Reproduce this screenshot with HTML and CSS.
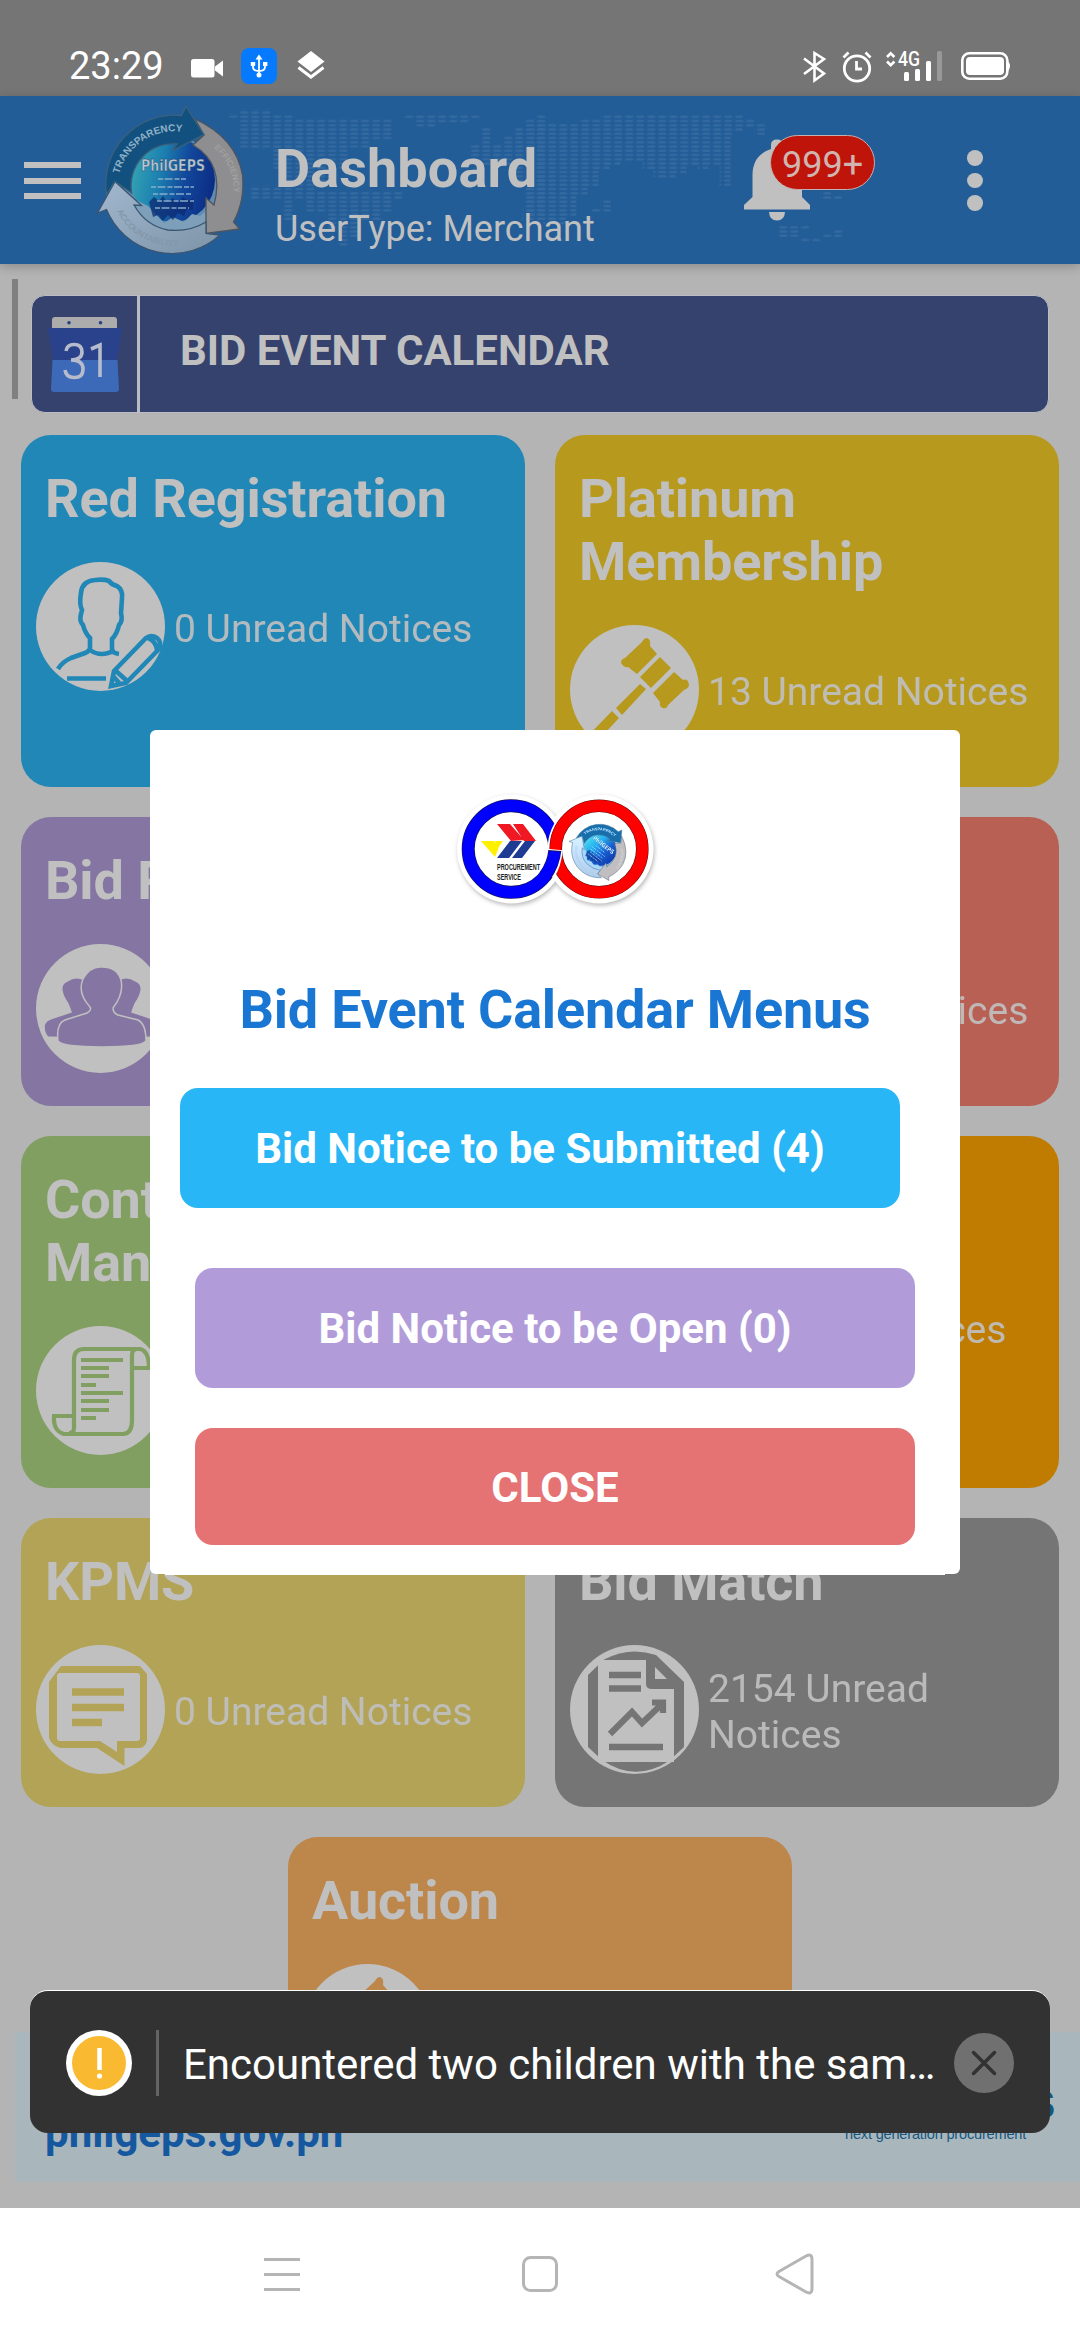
FILE: index.html
```html
<!DOCTYPE html>
<html lang="en">
<head>
<meta charset="utf-8">
<title>PhilGEPS Dashboard</title>
<link rel="stylesheet" href="styles.css">
</head>
<body>
<div class="phone">
  <div class="statusbar">
    <span class="clock">23:29</span>
    <svg class="status-left" width="140" height="40" viewBox="187 46 140 40">
      <rect x="191" y="59" width="23.500" height="18.500" rx="2.500" fill="#fff"/>
      <path d="M223 60.500v16l-8-6v-4z" fill="#fff"/>
      <rect x="241" y="48" width="36" height="36" rx="8" fill="#057aff"/>
      <g stroke="#fff" stroke-width="1.800" fill="none"><path d="M259 58v18M253 64v3q0 4 6 4t6-4v-3"/></g>
      <path d="M259 54.500l3.500 5h-7zM250.800 62h4.400v4h-4.400zM263 62h4.400v4H263z" fill="#fff"/><circle cx="259" cy="75" r="2.500" fill="#fff"/>
      <path d="M311 51l13.500 10.500L311 72l-13.500-10.500z" fill="#fff"/>
      <path d="M298.500 67.500L311 77l12.500-9.500" stroke="#fff" stroke-width="3" fill="none"/>
    </svg>
    <svg class="status-right" width="216" height="40" viewBox="800 46 216 40">
      <path d="M804 59l20 15-9.500 7V53.500l9.500 6-20 15" transform="translate(0 -.500)" fill="none" stroke="#fff" stroke-width="2.600"/>
      <g fill="none" stroke="#fff" stroke-width="2.800"><circle cx="857" cy="68.500" r="12.700"/><path d="M856.500 61v8h5.500M843.500 57.500l5-5M870.500 57.500l-5-5"/></g>
      <path d="M887 57l3.700-3.700 3.700 3.700M887 61.500l3.700 3.700 3.700-3.700" fill="none" stroke="#fff" stroke-width="2.600"/>
      <text x="898" y="66" class="net" textLength="22" lengthAdjust="spacingAndGlyphs">4G</text>
      <g fill="#fff"><rect x="904" y="72" width="5" height="9" rx="1.500"/><rect x="915" y="69" width="5" height="12" rx="1.500"/><rect x="926" y="61" width="5" height="20" rx="1.500"/></g>
      <rect x="937" y="51" width="5" height="30" rx="1.500" fill="#989898"/>
      <rect x="962.300" y="53.300" width="45" height="25.400" rx="7" fill="none" stroke="#fff" stroke-width="2.600"/>
      <rect x="966" y="57" width="38" height="18" rx="4" fill="#fff"/><path d="M1008 61q4 5 0 10z" fill="#fff"/>
    </svg>
  </div>

  <header class="appbar">
    <svg class="worldmap" width="1080" height="168" viewBox="0 96 1080 168">
      <defs>
        <pattern id="dots" x="271.700" y="114.600" width="11" height="4.250" patternUnits="userSpaceOnUse"><ellipse cx="5.500" cy="2.100" rx="4.300" ry="1.350" fill="#33699f"/></pattern>
      </defs>
      <g fill="url(#dots)">
        <path d="M272 114.500h22v4.300h99v21h-22v8h-22v21h-11v17h-22v13h-22v22h-11v-22h-33v-13h33v-17h-11v-21h-33v-30h-11v-4.200h11v-4h33z"/>
        <path d="M306 191h99v8.500h-11v12.800h-11v8.500h-22v17h-11v8.500h-11v-17h-11v-17h-22z"/>
        <path d="M403 114.500h77v4.300h-11v4.200h-33v4.200h-22v-8.400h-11z"/>
        <path d="M480 127.500h11v17h11v-8.500h11v-8.500h11v-8.700h11v-4.200h11v102h-22v-34h-11v-17h-33v-8.500h-11v-13h11z"/>
        <path d="M534 123h44v-4.200h22v-4.300h143v4.300h11v4.200h11v12.800h-11v-8.500h-11v4.250h-11v4.250h-1.500v51h-11v-21h-11v4.250h-11v-4.250h-11v8.500h-11v4.250h-22v-8.500h-11v-8.500h-22v4.250h-11v4.250h-11v17h-11v8.500h-11v21h-11v8.500h-22v-4.250h-22z"/>
        <path d="M600 199h11v13h-22v-4.200h11zM820 191h11v4.200h11v4.200h-22zM777 225h33v4.200h-11v8.500h-22zM821 233.700h11v-4.300h11v8.500h-22zM798 237.900h22v4.250h-22z"/>
      </g>
    </svg>
    <button class="menu" aria-label="Menu"><i></i><i></i><i></i></button>
    <svg class="emblem" width="152" height="156" viewBox="94 103 152 156">
      <defs>
        <linearGradient id="globe" x1="0" y1=".3" x2="1" y2=".5"><stop offset="0" stop-color="#35a5b4"/><stop offset=".35" stop-color="#1c80b0"/><stop offset=".65" stop-color="#12489c"/><stop offset="1" stop-color="#0c2c84"/></linearGradient>
        <linearGradient id="silver" x1="0" y1="0" x2="1" y2="1"><stop offset="0" stop-color="#a3b8ce"/><stop offset="1" stop-color="#7c93a8"/></linearGradient>
        <path id="arcT" d="M119 174A58 58 0 0 1 189 133"/>
        <path id="arcR" d="M214 148A54 54 0 0 1 228 214"/>
        <path id="arcB" d="M117 211A62 62 0 0 0 203 238"/>
        <g id="mark">
          <circle cx="173" cy="187" r="50" fill="#5f8db1"/>
          <circle cx="173" cy="180" r="42" fill="url(#globe)"/>
          <path d="M136 200l12 6 16 17 9-6 11 5 8-8 8 2 10-8 8 16-14 14-34 8-32-12z" fill="#7d9fba"/>
          <g fill="#0d2a72" opacity=".75"><path d="M149 202l5-5 5 4 4-5 4 6 6-4 5 5 5-6 5 4 5-3v12l-6-1-3 7-6-3-5 7-5-5-5 6-5-6-5 2z"/></g>
          <g stroke="#8db2cc" stroke-width="2" stroke-dasharray="5 1.500 8 2" opacity=".7"><path d="M158 179h28M151 187h43M153 194h38M157 201h37M155 208h34"/></g>
          <path d="M195 119Q236 138 242.500 175Q245 201 233.500 222L239.500 229L206 233.500V198L214 205Q225 164 193 145L204 135Z" fill="#8e8d8f" stroke="#4c5560" stroke-width="1.300"/>
          <path d="M115 181.500L141.500 205.500L134 205Q146 226 168 230Q190 232 206 222V233.500L220 235A71 71 0 0 1 106.500 209.500L97.500 213Z" fill="url(#silver)" stroke="#3a5670" stroke-width="1.300"/>
          <path d="M106.500 194.500A69 69 0 0 1 181.500 115.500L186 106.500L204 134.700L171.700 151L177 144A42 42 0 0 0 131.700 193L115 181.300Z" fill="#12517f" stroke="#3b617d" stroke-width="1.300"/>
          <text class="ring bright"><textPath href="#arcT">TRANSPARENCY</textPath></text>
          <text class="ring dim"><textPath href="#arcR">EFFICIENCY</textPath></text>
          <text class="ring"><textPath href="#arcB">ACCOUNTABILITY</textPath></text>
          <text x="141" y="171" class="markname" textLength="64" lengthAdjust="spacingAndGlyphs">PhilGEPS</text>
        </g>
      </defs>
      <use href="#mark"/>
    </svg>
    <div class="heading">
      <h1>Dashboard</h1>
      <p>UserType: Merchant</p>
    </div>
    <div class="bell">
      <svg width="68" height="84" viewBox="743 138 68 84"><path d="M771 149v-4q0-5.500 6-5.500t6 5.500v4q19 6 19 26v22l8 8v4.500h-66V205l8.500-8v-22q0-20 18.500-26zM769 212h16q-.500 8.500-8 8.500t-8-8.500z" fill="#c0c0c0"/></svg>
      <span class="badge">999+</span>
    </div>
    <div class="more"><i></i><i></i><i></i></div>
  </header>

  <main class="content">
    <span class="scrollbar"></span>
    <section class="calendar">
      <div class="calicon"><svg width="76" height="78" viewBox="47 316 76 78">
        <path d="M52 329v-9q0-3 3-3h59q3 0 3 3v9z" fill="#acacac"/><circle cx="69" cy="322.700" r="1.800" fill="#2b3f85"/><circle cx="100.500" cy="322.700" r="1.800" fill="#2b3f85"/>
        <path d="M48 328h74l-5 32H53z" fill="#2a418b"/><path d="M52.500 360h65l1.500 29q0 3-3 3H54q-3 0-3-3z" fill="#3c69b8"/>
        <path d="M66 351q1-6.500 8-6.500 8 0 8 7.500t-11 8q12 0 12 9t-9 8.500q-8 0-9-7.500M91 349l9-4V377" fill="none" stroke="#b6bccb" stroke-width="3.600"/>
      </svg></div>
      <h2>BID EVENT CALENDAR</h2>
    </section>

    <section class="cards">
      <article class="card red-reg"><h3>Red Registration</h3><div class="row"><svg class="icon" viewBox="0 0 129 129"><circle cx="64.500" cy="64.500" r="64.500" fill="#c0c0c0"/>
        <g fill="none" stroke="#2187b7" stroke-width="4.600"><path d="M22 107q4-7 13-11l14-5q5-2 5-6V76q-5-5-7-13-4-4-2-11l1-4q-3-6-1-17 1-12 14-13 9-1 14 1 3 4 8 5 6 4 5 12l-1 15q2 8-2 12-2 9-7 14v10q0 4 7 5M54 88q11 8 25 0M31 116.500h39"/><path d="M78 109l32-33q5-4 11 0 5 4 2 11l-33 34-15 3zM80 109l10 9M112 76q8 3 9 12M77 114l7 8"/></g></svg><span>0 Unread Notices</span></div></article>

      <article class="card platinum"><h3>Platinum Membership</h3><div class="row"><svg class="icon" viewBox="0 0 129 129"><circle cx="64.500" cy="64.500" r="64.500" fill="#c0c0c0"/><g id="gavel" fill="currentColor"><path d="M51 38q0-4 4-5l17-16q2-4 5-4 4 1 3 8l7 8-20 20-9-7q-4 1-7-4zM90 32l11 11-20 20-11-11zM104 47l9 8q5-2 6 5 0 3-5 5L98 80q-1 4-5 3-4-1-3-6l-7-9zM70 59l6 5-24 26-6-7zM42 86l7 7-29 31-8-7z"/></g></svg><span>13 Unread Notices</span></div></article>

      <article class="card results"><h3>Bid Results</h3><div class="row"><svg class="icon" viewBox="0 0 129 129"><circle cx="64.500" cy="64.500" r="64.500" fill="#c0c0c0"/><g fill="currentColor" stroke="#c0c0c0" stroke-width="1.500"><path id="side" d="M8 82q1-6 9-8l18-6q-1-3-3-8-12-18-1-23 13-8 23 4l2 33-24 20-20-1q-4-3-4-11z"/><use href="#side" transform="matrix(-1 0 0 1 131 0)"/><path d="M22 97q-2-18 7-21l22-7q5-3 3-6-13-14-7-28 7-13 19-12 15 0 19 13 3 14-8 28 0 5 5 7l20 5q8 4 8 21-4 6-44 6t-44-6z"/></g></svg><span>0 Unread Notices</span></div></article>

      <article class="card coral"><h3>Bid Notices</h3><div class="row"><svg class="icon" viewBox="0 0 129 129"><circle cx="64.500" cy="64.500" r="64.500" fill="#c0c0c0"/></svg><span>12 Unread Notices</span></div></article>

      <article class="card contract"><h3>Contract Management</h3><div class="row"><svg class="icon" viewBox="0 0 129 129"><circle cx="64.500" cy="64.500" r="64.500" fill="#c0c0c0"/><g fill="none" stroke="#819f61" stroke-width="4.200"><path d="M38 90V34q0-11 10-11h56q9 2 9 19H96V29q0-5 4-6M96 42v52q0 14-9 14H28q-11-3-10-18h20v12q0 5-5 5"/><path d="M45 34h42M45 42h28M45 50h28M45 59h15M45 67h42M45 75h28M45 84h28M45 92h15"/></g></svg><span>0 Unread Notices</span></div></article>

      <article class="card amber"><h3>Awards</h3><div class="row"><svg class="icon" viewBox="0 0 129 129"><circle cx="64.500" cy="64.500" r="64.500" fill="#c0c0c0"/></svg><span>0 Unread Notices</span></div></article>

      <article class="card kpms"><h3>KPMS</h3><div class="row"><svg class="icon" viewBox="0 0 129 129"><circle cx="64.500" cy="64.500" r="64.500" fill="#c0c0c0"/><path d="M25 21h79l7 8v67q-2 6-7 7H88.500v18L61 103H25q-9-2-12-10V37z" fill="#b2a356"/><path d="M24 28h77q3 0 3 3v62q0 3-3 3H81v11L64 96H24q-3 0-3-3V31q0-3 3-3z" fill="#c0c0c0"/><path d="M36 47h52M36 62.500h52M36 77.500h30" stroke="#b2a356" stroke-width="7.500"/></svg><span>0 Unread Notices</span></div></article>

      <article class="card match"><h3>Bid Match</h3><div class="row"><svg class="icon" viewBox="0 0 129 129"><circle cx="64.500" cy="64.500" r="64.500" fill="#c0c0c0"/><path d="M18 30L34 14.500Q60 1 86 10l28 27v65l-15 14q-34 22-67-1L18 102z" fill="#757575"/><path d="M28 15h48v24q0 5 6 5h22v73H28z" fill="#c0c0c0"/><path d="M85 22v12h12z" fill="#c0c0c0"/><path d="M39 30h32M39 43.500h32M39 102h54" stroke="#757575" stroke-width="6.500"/><path d="M40 89l22-22 10 11 20-19M82 57.500h11V68" fill="none" stroke="#757575" stroke-width="6.200"/></svg><span>2154 Unread Notices</span></div></article>

      <article class="card auction"><h3>Auction</h3><div class="row"><svg class="icon" viewBox="0 0 129 129"><circle cx="64.500" cy="64.500" r="64.500" fill="#c0c0c0"/><use href="#gavel"/></svg></div></article>
    </section>
  </main>

  <footer class="site">
    <strong>philgeps.gov.ph</strong>
    <div class="brand"><b>PhilGEPS</b><small>next generation procurement</small></div>
  </footer>

  <nav class="navbar">
    <svg width="1080" height="132" viewBox="0 2208 1080 132" fill="none" stroke="#b5b5b5" stroke-width="3">
      <path d="M264 2259.500h36M264 2274.500h36M264 2289.500h36"/>
      <rect x="523.500" y="2257.500" width="33" height="33" rx="7"/>
      <path d="M779 2271.500l27-15.500q6-3 6 3.500v29q0 6.500-6 3.500l-27-15.500q-4-2.500 0-5z"/>
    </svg>
  </nav>

  <div class="modal" role="dialog">
    <svg class="modal-logo" width="240" height="160" viewBox="435 770 240 160">
      <g class="lift"><circle cx="511.500" cy="849" r="54.500" fill="#fff"/><circle cx="599" cy="849" r="54.500" fill="#fff"/></g>
      <g fill="none">
        <circle cx="511.500" cy="849" r="43.300" stroke="#151560" stroke-width="13"/>
        <circle cx="511.500" cy="849" r="43.300" stroke="#00f" stroke-width="11.600"/>
        <circle cx="599" cy="849" r="43.300" stroke="#fff" stroke-width="16"/>
        <circle cx="599" cy="849" r="43.300" stroke="#601010" stroke-width="12.600"/>
        <circle cx="599" cy="849" r="43.300" stroke="#f00" stroke-width="11.400"/>
        <path d="M554.700 849.500Q553.500 864 547 874" stroke="#fff" stroke-width="16"/>
        <path d="M554.800 850.500Q553.500 864 545 876" stroke="#151560" stroke-width="13"/>
        <path d="M554.700 851.500Q553.500 864 544 877" stroke="#00f" stroke-width="11.600"/>
      </g>
      <path d="M497 824h13l14 16-13 1zM513 824h10l13 17h-12z" fill="#f01822"/><path d="M481 841h13l5 6-4 10zM495 841h8l-5 7z" fill="#fff000"/><path d="M510 841h12l-13 17H497zM525 841h10l-13 17h-10z" fill="#203b93"/>
      <text x="497" y="870" class="ps" textLength="43" lengthAdjust="spacingAndGlyphs">PROCUREMENT</text><text x="497" y="879.500" class="ps" textLength="24" lengthAdjust="spacingAndGlyphs">SERVICE</text>
      <use href="#mark" class="bright-mark" transform="translate(599 851) rotate(38) scale(.39) translate(-173 -185)"/>
    </svg>
    <h2>Bid Event Calendar Menus</h2>
    <button class="btn submit">Bid Notice to be Submitted (4)</button>
    <button class="btn open">Bid Notice to be Open (0)</button>
    <button class="btn close">CLOSE</button>
  </div>

  <div class="toast">
    <span class="warn"><svg width="66" height="66" viewBox="0 0 66 66"><circle cx="33" cy="33" r="33" fill="#fff"/><circle cx="33" cy="33" r="27" fill="#f9ba32"/><path d="M33.500 18v22" stroke="#fff" stroke-width="4.500"/><circle cx="33.500" cy="46" r="2.600" fill="#fff"/></svg></span>
    <span class="rule"></span>
    <p>Encountered two children with the sam…</p>
    <svg class="dismiss" width="60" height="60" viewBox="0 0 60 60"><circle cx="30" cy="30" r="30" fill="#707070"/><path d="M19.500 19.500l21 21M40.500 19.500l-21 21" stroke="#323232" stroke-width="3.500" stroke-linecap="round"/></svg>
  </div>
</div>
</body>
</html>
```
FILE: styles.css
```css
* { box-sizing: border-box; margin: 0; padding: 0; }
body { font-family: Roboto, sans-serif; background: #b4b4b4; }
button { font-family: inherit; border: 0; display: block; }
svg { display: block; }

.phone { position: relative; width: 1080px; height: 2340px; display: flex; flex-direction: column; overflow: hidden; background: #b4b4b4; }

.statusbar { height: 96px; flex: none; background: #757575; display: flex; align-items: flex-start; padding: 46px 64px 0 69px; }
.clock { color: #fff; font-size: 38px; line-height: 40px; width: 118px; }
.status-right { margin-left: auto; }
.net { font: 500 20px Roboto, sans-serif; fill: #fff; }

.appbar { position: relative; z-index: 1; height: 168px; flex: none; background: #235d98; display: flex; align-items: flex-start; box-shadow: 0 3px 10px rgba(0, 0, 0, .22); }
.worldmap { position: absolute; left: 0; top: 0; }
.menu { background: none; width: 57px; margin: 66px 0 0 24px; display: flex; flex-direction: column; gap: 9.500px; }
.menu i { height: 6px; background: #c0c0c0; }
.emblem { position: relative; margin: 7px 0 0 13px; }
.ring { font: bold 8.500px "Liberation Sans", sans-serif; fill: #8398aa; }
.ring.dim { fill: #a0a0a0; }
.ring.bright { font-size: 10px; fill: #8fb0c6; }
.markname { font: bold 15px "DejaVu Sans Condensed", "DejaVu Sans", sans-serif; fill: #b7c6cf; stroke: #21406b; stroke-width: .4px; }
.heading { position: relative; margin: 41px 0 0 29px; width: 465px; color: #c0c0c0; }
.heading h1 { font-size: 54px; line-height: 63px; font-weight: 700; letter-spacing: .1px; }
.heading p { font-size: 36px; line-height: 42px; margin-top: 8px; }
.bell { position: relative; margin: 42px 0 0 3px; width: 68px; }
.badge { position: absolute; left: 27px; top: -3px; width: 105px; height: 55px; border: 1px solid #c4b0b0; border-radius: 28px; background: #bf1409; color: #d0b4b0; font-size: 36px; line-height: 59px; text-align: center; }
.more { margin: 54px 0 0 156px; display: flex; flex-direction: column; gap: 7px; }
.more i { width: 16px; height: 15.500px; border-radius: 50%; background: #c0c0c0; }

.content { position: relative; flex: none; height: 1768px; overflow: hidden; padding: 31px 21px 0; }
.scrollbar { position: absolute; left: 12px; top: 15px; width: 6px; height: 120px; background: #808080; }
.calendar { margin-left: 10px; width: 1018px; height: 118px; border: 1px solid #bbbcc4; border-radius: 14px; background: #36426e; display: flex; }
.calicon { width: 108px; border-right: 3px solid #babcc5; padding: 20px 0 0 15px; }
.calendar h2 { color: #c0c0c0; font-size: 42px; line-height: 50px; margin: 30px 0 0 40px; }
.cards { display: flex; flex-wrap: wrap; justify-content: center; gap: 30px; margin-top: 22px; }
.card { width: 504px; border-radius: 30px; padding: 32px 15px 33px; }
.card h3 { color: #c0c0c0; font-size: 54px; line-height: 63px; font-weight: 700; letter-spacing: -.1px; margin: 0 9px 32px; }
.card .row { display: flex; align-items: center; gap: 9px; }
.card .icon { width: 129px; height: 129px; flex: none; }
.card span { color: #c0c0c0; opacity: .92; font-size: 39px; line-height: 46px; padding-top: 4px; }
.red-reg { background: #2187b7; }
.platinum { background: #b7991e; color: #b7991e; }
.results { background: #8575a2; color: #8575a2; }
.coral { background: #b96055; }
.contract { background: #819f61; }
.amber { background: #bf7c00; }
.kpms { background: #b2a356; }
.match { background: #757575; }
.auction { background: #bd864a; color: #bd864a; }

.site { flex: none; height: 150px; margin: 0 0 26px 15px; background: #a9b6bc; display: flex; justify-content: space-between; padding: 76px 25px 0 30px; }
.site strong { color: #1558a0; font-size: 42px; line-height: 50px; }
.brand { display: flex; flex-direction: column; color: #15587f; font-family: "Liberation Sans", sans-serif; margin-top: -24px; width: 210px; }
.brand b { font-size: 38px; line-height: 42px; text-align: right; }
.brand small { font-size: 14.500px; line-height: 16px; letter-spacing: -.16px; white-space: nowrap; }
.navbar { flex: none; height: 132px; background: #fff; }

.modal { position: absolute; z-index: 2; left: 150px; top: 730px; width: 810px; height: 844px; border-radius: 6px; background: #fff; padding-top: 40px; }
.modal::after { content: ""; position: absolute; left: 15px; right: 15px; bottom: -1px; height: 1px; background: #fff; }
.modal-logo { margin: 0 auto; }
.lift { filter: drop-shadow(1px 2px 2px rgba(0, 0, 0, .28)); }
.ps { font: bold 8.500px "Liberation Sans", sans-serif; fill: #222; }
.bright-mark { filter: brightness(1.35); }
.modal h2 { color: #1976d2; font-size: 54px; line-height: 63px; letter-spacing: -.18px; text-align: center; margin: 48px 0 47px; }
.btn { width: 720px; height: 120px; border-radius: 18px; color: #fff; font-size: 42px; font-weight: 700; text-align: center; }
.submit { background: #29b6f6; margin-left: 30px; }
.open { background: #b19cd9; margin: 60px 0 40px 45px; }
.close { background: #e57373; height: 117px; margin-left: 45px; padding-top: 2px; }

.toast { position: absolute; z-index: 3; left: 30px; top: 1990px; width: 1020px; height: 143px; border-radius: 18px; background: #323232; display: flex; align-items: center; border-top: 1px solid #fff; padding: 2px 36px 0; }
.rule { width: 3px; height: 66px; background: #646464; margin: 0 24px; }
.toast p { color: #fff; font-size: 42px; line-height: 50px; padding-top: 4px; white-space: nowrap; }
.dismiss { margin-left: auto; flex: none; }
```
